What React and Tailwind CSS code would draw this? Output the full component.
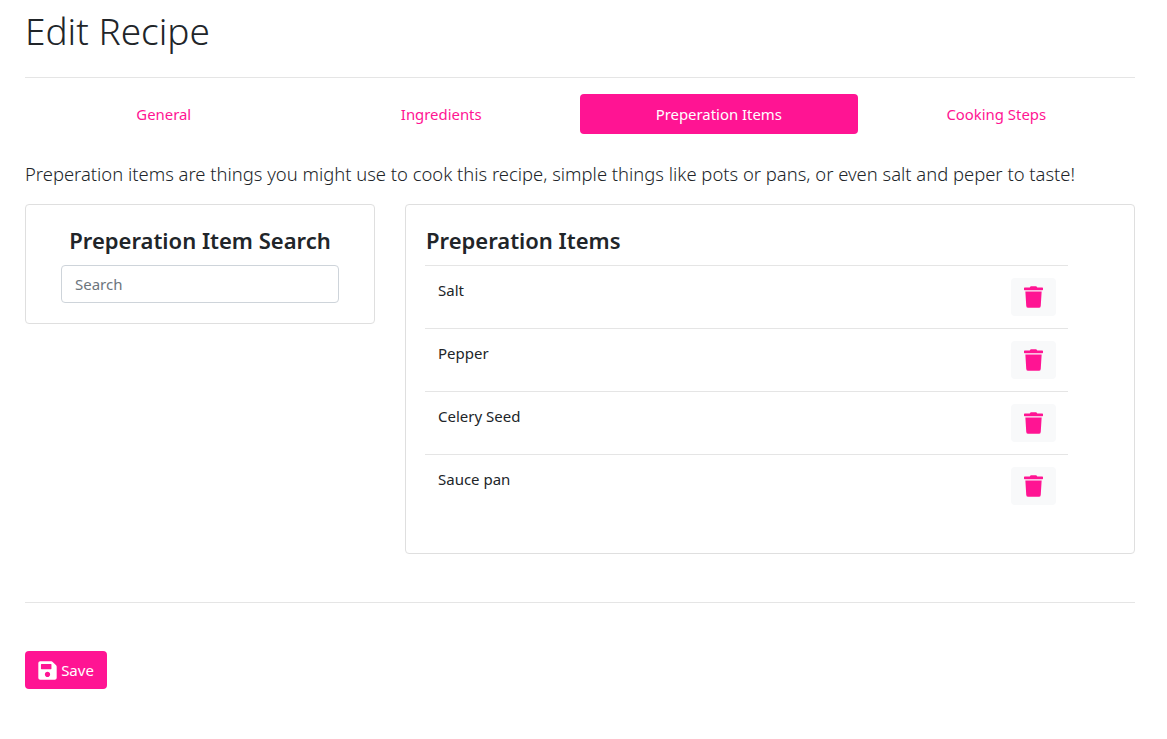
import { FaTrash, FaSave } from 'react-icons/fa';

const tabs = ['General', 'Ingredients', 'Preperation Items', 'Cooking Steps'];
const items = ['Salt', 'Pepper', 'Celery Seed', 'Sauce pan'];

export default function App() {
  return (
    <div className="min-h-[739px] bg-white pl-[25px] pr-[32px] font-['Noto_Sans',sans-serif] text-[#212529]">
      <h1 className="h-[77px] pt-[7px] text-[37px] leading-[48px] font-light">Edit Recipe</h1>
      <hr className="border-t border-[#e5e5e5]" />

      <div className="mt-[16px] flex h-[40px] text-[14.9px]">
        {tabs.map((t, i) => (
          <div
            key={t}
            className={
              i === 2
                ? 'flex flex-1 items-center justify-center rounded bg-[#ff1493] text-white'
                : 'flex flex-1 items-center justify-center text-[#ff1493]'
            }
          >
            {t}
          </div>
        ))}
      </div>

      <p className="mt-[26px] text-[18.42px] leading-[28px] font-light whitespace-nowrap">
        Preperation items are things you might use to cook this recipe, simple things like pots or pans, or even salt and peper to taste!
      </p>

      <div className="mt-[16px] flex items-start gap-[30px]">
        <div className="h-[120px] w-[350px] rounded border border-[#dfdfdf] px-[35px] pt-[20px]">
          <h2 className="text-center text-[22px] leading-[30px] font-semibold">Preperation Item Search</h2>
          <input
            placeholder="Search"
            className="mt-[10px] h-[38px] w-full rounded border border-[#ced4da] px-[13px] text-[15px] outline-none placeholder:text-[#6c757d]"
          />
        </div>

        <div className="h-[350px] flex-1 rounded border border-[#dfdfdf] pt-[20px] pl-[20px]">
          <h2 className="pb-[10px] text-[22px] leading-[30px] font-semibold">Preperation Items</h2>
          <ul className="-ml-px w-[643px]">
            {items.map((item) => (
              <li key={item} className="flex h-[63px] justify-between border-t border-[#e5e5e5] px-[12px] pt-[12px]">
                <span className="pl-px text-[15px] leading-[24px] text-[#212529]">{item}</span>
                <button className="flex h-[38px] w-[45px] items-center justify-center rounded bg-[#f8f9fa] text-[#ff1493]">
                  <FaTrash className="h-[22px] w-[19px]" />
                </button>
              </li>
            ))}
          </ul>
        </div>
      </div>

      <hr className="mt-[48px] border-t border-[#e5e5e5]" />

      <button className="mt-[48px] flex h-[38px] w-[82px] items-center justify-center gap-[4px] rounded bg-[#ff1493] text-[15px] text-white">
        <FaSave className="h-[21px] w-[19px]" />
        Save
      </button>
    </div>
  );
}
